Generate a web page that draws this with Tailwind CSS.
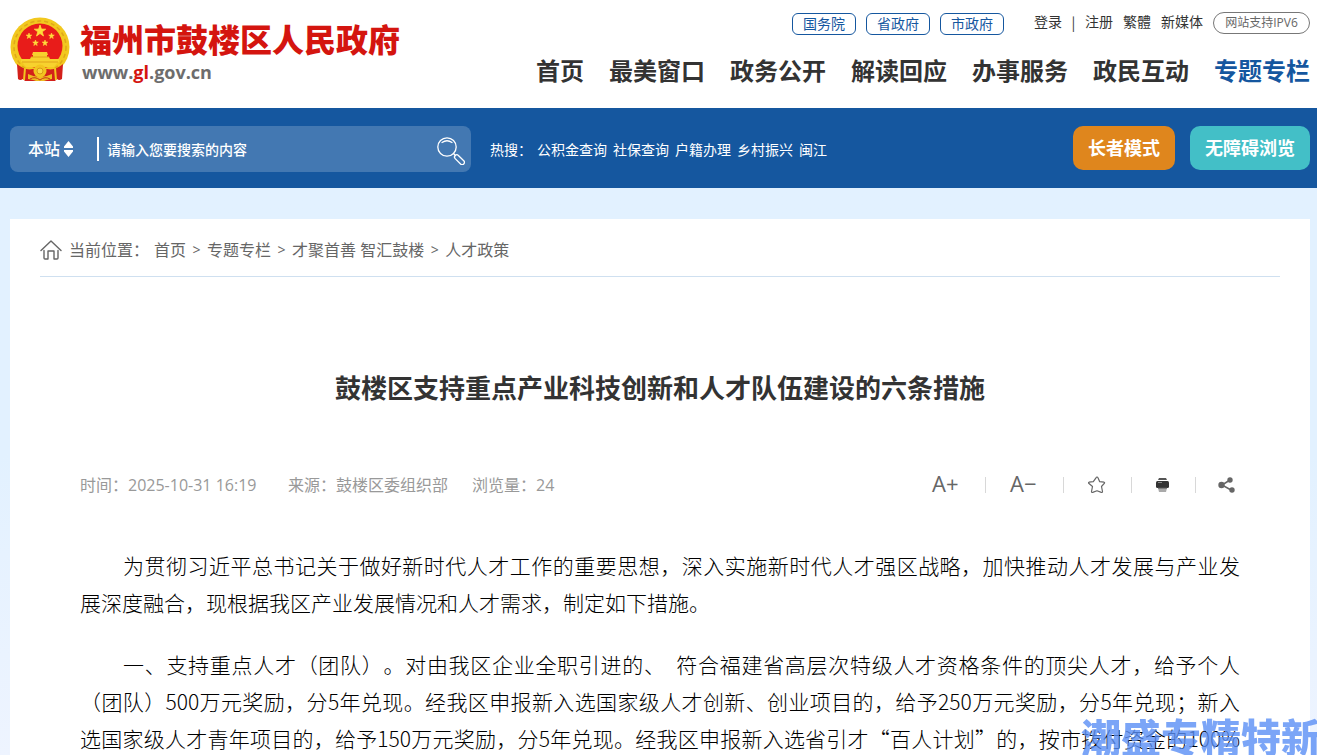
<!DOCTYPE html>
<html lang="zh-CN">
<head>
<meta charset="utf-8">
<meta name="viewport" content="width=device-width, initial-scale=1">
<title>鼓楼区支持重点产业科技创新和人才队伍建设的六条措施</title>
<script src="https://cdn.jsdelivr.net/npm/@tailwindcss/browser@4"></script>
</head>
<body class="h-screen overflow-hidden bg-linear-to-b from-[#e2f1ff] from-60% to-[#eef4ff] font-['Open_Sans','Noto_Sans_CJK_SC',sans-serif] text-[#333]">
<header class="flex h-[108px] justify-between bg-white pl-[10px] pr-[7px]">
  <a href="#" class="flex items-start gap-[10px] pt-4">
    <svg class="mt-px h-[65px] w-[60px]" viewBox="0 0 60 65" aria-hidden="true">
      <circle cx="30" cy="30" r="29.500" fill="#f2c81f"/>
      <circle cx="30" cy="30" r="26" fill="none" stroke="#e0a818" stroke-width="1.500" stroke-dasharray="4 3"/>
      <path d="M7 47q8 7 16 5h14q8 2 16-5l-1 15q-3 2-5 0l-2 2H15l-2-2q-3 2-5 0z" fill="#d3201a"/>
      <circle cx="30" cy="29" r="22.500" fill="#e81c1a"/>
      <path d="M30 8l1.400 4.100 4.300.1-3.500 2.600 1.300 4.200-3.500-2.500-3.500 2.500 1.300-4.200-3.500-2.600 4.300-.1z" fill="#ffdc3a" stroke="#ffdc3a" stroke-width=".8"/>
      <g fill="#ffdc3a" stroke="#ffdc3a" stroke-width=".6">
        <path d="M19 16l.7 2 2.100.1-1.700 1.300.6 2.100-1.700-1.200-1.700 1.200.6-2.100-1.700-1.300 2.100-.1z"/>
        <path d="M41.500 16l.7 2 2.100.1-1.700 1.300.6 2.100-1.700-1.200-1.700 1.200.6-2.100-1.700-1.300 2.100-.1z"/>
        <path d="M25.500 23l.7 2 2.100.1-1.700 1.300.6 2.100-1.700-1.200-1.700 1.200.6-2.100-1.700-1.300 2.100-.1z"/>
        <path d="M35 23l.7 2 2.100.1-1.700 1.300.6 2.100-1.700-1.200-1.700 1.200.6-2.100-1.700-1.300 2.100-.1z"/>
      </g>
      <path d="M23 35h14l1 3h-1v2h2l1 2h9v3h-1l-4 5H16l-4-5h-1v-3h9l1-2h2v-2h-1z" fill="#f7d22e"/>
      <path d="M21 40h18M12 45h36" stroke="#e0a31a" fill="none"/>
      <circle cx="30" cy="54" r="6.500" fill="#f2c51f"/>
      <circle cx="30" cy="54" r="3" fill="#f8d940" stroke="#d99a15"/>
      <path d="M15 51l-1 12M45 51l1 12" stroke="#f2c51f" stroke-width="2" fill="none"/>
      <path d="M18 57q6 3 12 3 6 0 12-3v5q-6 1-8 2h-8q-2-1-8-2z" fill="#edbd20"/>
      <path d="M20 62q5-3 10 1 5-4 10-1" stroke="#c9321a" fill="none"/>
    </svg>
    <span class="flex flex-col">
      <span class="text-[32px]/[48px] font-black text-[#d4150f]">福州市鼓楼区人民政府</span>
      <span class="pl-[2px] text-[18px]/[16px] font-bold text-[#6d6d6d]">www.<span class="text-[#d4150f]">gl</span>.gov.cn</span>
    </span>
  </a>
  <div class="flex flex-col items-end">
    <div class="flex pt-3 text-[14px]/[20px]">
      <div class="mr-[30px] flex gap-[10px] text-[#15579f]">
        <a href="#" class="mt-px h-[22px] rounded-md border border-[#15579f] px-[10px]">国务院</a>
        <a href="#" class="mt-px h-[22px] rounded-md border border-[#15579f] px-[10px]">省政府</a>
        <a href="#" class="mt-px h-[22px] rounded-md border border-[#15579f] px-[10px]">市政府</a>
      </div>
      <div class="flex gap-[10px]">
        <a href="#">登录</a><span class="flex w-[3px] justify-center font-['Noto_Sans_CJK_SC']">|</span><a href="#">注册</a><a href="#">繁體</a><a href="#">新媒体</a>
        <a href="#" class="flex h-[22px] w-[97px] items-center justify-center rounded-full border border-[#777] text-[12px] text-[#666]">网站支持IPV6</a>
      </div>
    </div>
    <nav class="mt-[18px] flex gap-[25px] text-[24px]/[36px] font-bold">
      <a href="#">首页</a><a href="#">最美窗口</a><a href="#">政务公开</a><a href="#">解读回应</a><a href="#">办事服务</a><a href="#">政民互动</a><a href="#" class="text-[#15579f]">专题专栏</a>
    </nav>
  </div>
</header>

<section class="flex h-20 items-center bg-[#15579f] pl-[10px] pr-[7px] text-white">
  <form class="mt-[2px] flex h-[46px] w-[461px] items-center rounded-lg bg-white/20 pl-[18px] pr-[6px]">
    <button type="button" class="flex w-[69px] items-center gap-1 text-[16px] font-medium">本站
      <svg class="h-4 w-[9px]" viewBox="0 0 9 16" fill="currentColor" aria-hidden="true"><path d="M4.500 0L9 5.500V7H0V5.500zM0 9h9v1.500L4.500 16 0 10.500z"/></svg>
    </button>
    <span class="h-6 w-[2px] bg-white"></span>
    <input type="text" aria-label="搜索" placeholder="请输入您要搜索的内容" class="min-w-0 flex-1 px-2 text-[14px] font-medium outline-none placeholder:text-white">
    <button type="button" aria-label="搜索">
      <svg class="mt-1 h-7 w-7" viewBox="0 0 28 28" fill="none" stroke="currentColor" stroke-width="1.300" stroke-linecap="round" aria-hidden="true"><circle cx="10" cy="10" r="9.200"/><path d="M5 5.500q5-3.500 10 0M16.500 16.500l2 2"/><rect x="16.500" y="20.500" width="12" height="4.500" rx="2.200" transform="rotate(45 22.500 22.700)"/></svg>
    </button>
  </form>
  <div class="ml-[19px] mt-[2px] flex gap-[6px] text-[14px]">
    <span class="-mr-px">热搜：</span><a href="#">公积金查询</a><a href="#">社保查询</a><a href="#">户籍办理</a><a href="#">乡村振兴</a><a href="#">闽江</a>
  </div>
  <div class="ml-auto flex gap-[15px] text-[18px] font-bold">
    <button type="button" class="h-11 w-[102px] rounded-[10px] bg-[#df861d] pt-px">长者模式</button>
    <button type="button" class="h-11 w-[120px] rounded-[10px] bg-[#43bfc7] pt-px">无障碍浏览</button>
  </div>
</section>

<main class="ml-[10px] mr-[7px] mt-[31px] min-h-full bg-white px-[30px]">
  <nav class="flex h-[58px] items-center border-b border-[#cfe0f0] pt-[5px] text-[16px] text-[#666]">
    <svg class="mr-[7px] h-5 w-[22px]" viewBox="0 0 22 20" fill="none" stroke="currentColor" stroke-width="1.400" stroke-linecap="round" stroke-linejoin="round" aria-hidden="true"><path d="M1 10.500L11 1l10 9.500M4 10.500V18q0 1 1 1h3v-8h6v8h3q1 0 1-1v-7.500"/></svg>
    <span class="mr-[5px]">当前位置：</span>
    <div class="flex gap-[6px]"><a href="#">首页</a><span class="w-[9px] text-center text-[14px]/[24px]">&gt;</span><a href="#">专题专栏</a><span class="w-[9px] text-center text-[14px]/[24px]">&gt;</span><a href="#">才聚首善 智汇鼓楼</a><span class="w-[9px] text-center text-[14px]/[24px]">&gt;</span><a href="#">人才政策</a></div>
  </nav>
  <article class="px-10">
    <h1 class="mt-[91px] text-center text-[26px]/[40px] font-bold">鼓楼区支持重点产业科技创新和人才队伍建设的六条措施</h1>
    <div class="mt-[60px] flex h-[34px] items-center justify-between">
      <div class="flex gap-6 text-[16px] text-[#999]"><span class="min-w-[184px]">时间：2025-10-31 16:19</span><span>来源：鼓楼区委组织部</span><span>浏览量：24</span></div>
      <div class="flex items-center pr-[5px] text-[#666]">
        <button type="button" class="w-[53px] pb-1 text-left text-[22px]">A+</button>
        <span class="mr-[24px] h-4 w-px bg-[#d8d8d8]"></span>
        <button type="button" class="w-[53px] pb-1 text-left text-[22px]">A−</button>
        <span class="h-4 w-px bg-[#d8d8d8]"></span>
        <button type="button" aria-label="收藏" class="flex w-[67px] justify-center pr-[2px]"><svg class="h-[18px] w-[18px]" viewBox="0 0 18 18" fill="none" stroke="currentColor" stroke-width="1.200" stroke-linejoin="round" aria-hidden="true"><path d="M9 1q.7 0 1 .8l1.700 3.900 4.300.5q1 .3.300 1.100L13.500 10.500l1 5q0 1.300-1.200.9L9 14.800l-4.300 1.600q-1.200.4-1.200-.9l1-5L.7 7.300Q0 6.500 1 6.200l4.300-.5L8 1.800Q8.300 1 9 1z"/></svg></button>
        <span class="h-4 w-px bg-[#d8d8d8]"></span>
        <button type="button" aria-label="打印" class="flex w-[63px] justify-center pr-[2px]"><svg class="h-[14px] w-[13px]" viewBox="0 0 13 14" aria-hidden="true"><path d="M3 0h7l1 2H2z" fill="#555"/><rect y="3" width="13" height="7" rx="1.500" fill="#333"/><path d="M2 4.500h4" stroke="#888"/><path d="M2 10h9l-1 4H3z" fill="#aaa"/><path d="M2 10h9" stroke="#555"/></svg></button>
        <span class="mr-[22px] h-4 w-px bg-[#d8d8d8]"></span>
        <button type="button" aria-label="分享"><svg class="h-4 w-[17px]" viewBox="0 0 17 16" fill="currentColor" aria-hidden="true"><path d="M12 3L4 8l9 5" fill="none" stroke="currentColor" stroke-width="1.500"/><circle cx="12" cy="3" r="2.700"/><circle cx="3.500" cy="8" r="3.200"/><circle cx="14" cy="13" r="2.700"/></svg></button>
      </div>
    </div>
    <div class="mt-[45px] font-['Noto_Sans_CJK_SC',serif] text-[21px]/[37px] font-light whitespace-nowrap text-black [text-spacing-trim:space-all]">
      <p class="mb-[25px]">
        <span class="block pl-[43px] [text-align-last:justify]">为贯彻习近平总书记关于做好新时代人才工作的重要思想，深入实施新时代人才强区战略，加快推动人才发展与产业发</span>
        <span class="block">展深度融合，现根据我区产业发展情况和人才需求，制定如下措施。</span>
      </p>
      <p>
        <span class="block pl-[43px] [text-align-last:justify]">一、支持重点人才（团队）。对由我区企业全职引进的、&nbsp; 符合福建省高层次特级人才资格条件的顶尖人才，给予个人</span>
        <span class="block [text-align-last:justify]">（团队）500万元奖励，分5年兑现。经我区申报新入选国家级人才创新、创业项目的，给予250万元奖励，分5年兑现；新入</span>
        <span class="block [text-align-last:justify]">选国家级人才青年项目的，给予150万元奖励，分5年兑现。经我区申报新入选省引才“百人计划”的，按市拨付资金的100%</span>
      </p>
    </div>
  </article>
</main>
<div class="pointer-events-none fixed -right-1 -bottom-2 text-[40px]/[54px] font-black whitespace-nowrap text-[#5a8ff5]/80 font-['Noto_Sans_CJK_SC']">潮盛专精特新</div>
</body>
</html>
